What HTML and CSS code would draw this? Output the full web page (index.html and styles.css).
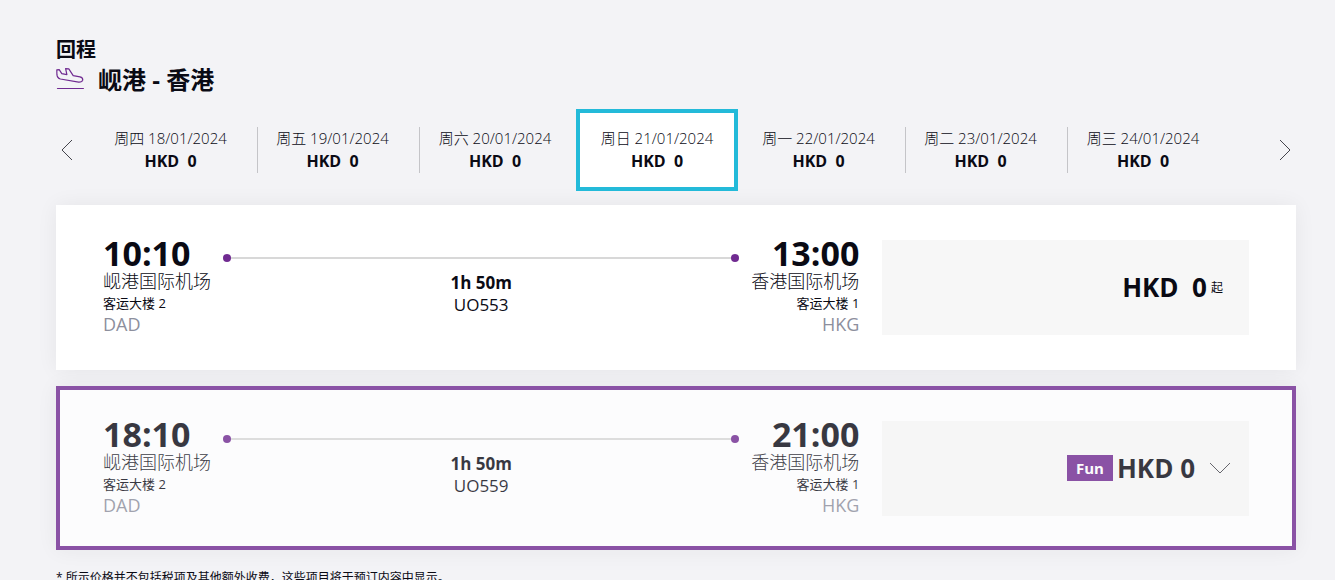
FILE: index.html
```html
<!DOCTYPE html>
<html lang="zh-CN">
<head>
    <meta charset="UTF-8">
    <meta name="viewport" content="width=device-width, initial-scale=1.0">
    <title>回程航班</title>
    <link rel="stylesheet" href="styles.css">
</head>
<body>

<main class="container">
    <header class="route-header">
        <h2 class="trip-type">回程</h2>
        <h1 class="route">
            <svg class="plane-icon" width="28" height="24" viewBox="0 0 28 24" fill="none" stroke="#702b91" stroke-width="1.2" stroke-linejoin="round" stroke-linecap="round" aria-hidden="true">
                <path d="M.8 1.8 L3.2 1.6 L5.8 5.6 L10.9 6.6 L9.6 .7 L12.8 .9 L17.2 7.6 L24 8.8 C26 9.3 27 10.6 26.7 12.2 C26.3 13.8 25 14.3 22.6 14.2 L4.4 11 C1.8 10.2 1 8.6 .9 6.4 Z"/>
                <path d="M1.5 20.5 H27.4"/>
            </svg>
            岘港 - 香港
        </h1>
    </header>

    <nav class="date-bar" aria-label="日期">
        <button class="arrow-btn prev" aria-label="上一个">
            <svg width="12" height="22" viewBox="0 0 12 22" fill="none" stroke="#44444c"><path d="M11 1 L1 11 L11 21"/></svg>
        </button>
        <div class="dates">
            <button class="date divider"><span>周四 18/01/2024</span><strong>HKD&nbsp; 0</strong></button>
            <button class="date divider"><span>周五 19/01/2024</span><strong>HKD&nbsp; 0</strong></button>
            <button class="date"><span>周六 20/01/2024</span><strong>HKD&nbsp; 0</strong></button>
            <button class="date selected"><span>周日 21/01/2024</span><strong>HKD&nbsp; 0</strong></button>
            <button class="date divider"><span>周一 22/01/2024</span><strong>HKD&nbsp; 0</strong></button>
            <button class="date divider"><span>周二 23/01/2024</span><strong>HKD&nbsp; 0</strong></button>
            <button class="date"><span>周三 24/01/2024</span><strong>HKD&nbsp; 0</strong></button>
        </div>
        <button class="arrow-btn next" aria-label="下一个">
            <svg width="12" height="22" viewBox="0 0 12 22" fill="none" stroke="#44444c"><path d="M1 1 L11 11 L1 21"/></svg>
        </button>
    </nav>

    <section class="flight">
        <div class="leg">
            <div class="stop">
                <div class="time">10:10</div>
                <div class="airport">岘港国际机场</div>
                <div class="terminal">客运大楼 2</div>
                <div class="code">DAD</div>
            </div>
            <div class="path">
                <div class="line"></div>
                <div class="duration">1h 50m</div>
                <div class="number">UO553</div>
            </div>
            <div class="stop arrive">
                <div class="time">13:00</div>
                <div class="airport">香港国际机场</div>
                <div class="terminal">客运大楼 1</div>
                <div class="code">HKG</div>
            </div>
        </div>
        <button class="price-box">
            <span class="price">HKD&nbsp; 0</span>
            <span class="from">起</span>
        </button>
    </section>

    <section class="flight active">
        <div class="leg">
            <div class="stop">
                <div class="time">18:10</div>
                <div class="airport">岘港国际机场</div>
                <div class="terminal">客运大楼 2</div>
                <div class="code">DAD</div>
            </div>
            <div class="path">
                <div class="line"></div>
                <div class="duration">1h 50m</div>
                <div class="number">UO559</div>
            </div>
            <div class="stop arrive">
                <div class="time">21:00</div>
                <div class="airport">香港国际机场</div>
                <div class="terminal">客运大楼 1</div>
                <div class="code">HKG</div>
            </div>
        </div>
        <button class="price-box">
            <span class="fare-tag">Fun</span>
            <span class="price">HKD 0</span>
            <svg class="chevron" width="22" height="12" viewBox="0 0 22 12" fill="none" stroke="#44444c"><path d="M1 1 L11 11 L21 1"/></svg>
        </button>
    </section>

    <p class="note">* 所示价格并不包括税项及其他额外收费，这些项目将于预订内容中显示。</p>
</main>

</body>
</html>
```
FILE: styles.css
```css
* {
    box-sizing: border-box;
}
body {
    margin: 0;
    height: 100vh;
    overflow: hidden;
    background-color: #f3f3f6;
    color: #0a0a14;
    font-family: "Open Sans", "Noto Sans CJK SC", sans-serif;
}
button {
    margin: 0;
    padding: 0;
    border: none;
    background: none;
    color: inherit;
    font-family: inherit;
    cursor: pointer;
}
.container {
    padding: 37px 39px 0 56px;
}
.trip-type {
    margin: 0;
    font-size: 20px;
    line-height: 26px;
}
.route {
    display: flex;
    align-items: center;
    gap: 14px;
    margin: 0;
    font-size: 24px;
    line-height: 34px;
}
.date-bar {
    display: flex;
    margin-top: 12px;
    height: 82px;
}
.arrow-btn {
    display: flex;
    align-items: center;
    padding: 0 5px;
}
.prev {
    width: 40px;
}
.next {
    width: 66px;
    justify-content: flex-end;
}
.dates {
    flex: 1;
    display: grid;
    grid-template-columns: repeat(7, 1fr);
    align-items: center;
}
.date {
    height: 46px;
    padding-right: 12px;
    display: flex;
    flex-direction: column;
    align-items: center;
    justify-content: center;
    font-size: 15px;
    font-weight: 300;
    line-height: 23px;
}
.date strong {
    font-size: 16px;
    font-weight: 700;
}
.divider {
    border-right: 1px solid #c4c4c8;
}
.selected {
    height: 82px;
    margin: 0 6px 0 -6px;
    padding: 0;
    border: 4px solid #23bad9;
    background-color: #fff;
}
.flight {
    display: flex;
    justify-content: space-between;
    align-items: center;
    margin-top: 14px;
    padding: 31px 47px 32px;
    background-color: #fff;
    box-shadow: 0 0 20px rgba(0, 0, 0, 0.06);
}
.active {
    margin-top: 16px;
    padding: 27px 43px;
    border: 4px solid #702b91;
    opacity: 0.8;
}
.leg {
    flex: 0 0 66%;
    display: flex;
    gap: 12px;
    padding-bottom: 4px;
}
.arrive {
    text-align: right;
}
.time {
    font-size: 34px;
    font-weight: 700;
    line-height: 34px;
}
.airport {
    font-size: 18px;
    font-weight: 300;
    line-height: 22px;
}
.terminal {
    font-size: 13px;
    line-height: 22px;
}
.code {
    color: #8d8f9d;
    font-size: 18px;
    line-height: 20px;
}
.path {
    flex: 1;
    padding-top: 18px;
    text-align: center;
    font-size: 17px;
    line-height: 22px;
}
.line {
    display: flex;
    align-items: center;
    justify-content: space-between;
    height: 8px;
    margin-bottom: 10px;
    background: linear-gradient(#d8d8d8, #d8d8d8) center / calc(100% - 8px) 2px no-repeat;
}
.line::before,
.line::after {
    content: "";
    width: 8px;
    height: 8px;
    border-radius: 50%;
    background-color: #702b91;
}
.duration {
    font-weight: 700;
}
.price-box {
    flex: 0 0 32%;
    display: flex;
    align-items: center;
    justify-content: flex-end;
    gap: 4px;
    height: 95px;
    padding-right: 26px;
    background-color: #f7f7f7;
}
.price {
    font-size: 26px;
    font-weight: 700;
}
.from {
    font-size: 12px;
}
.fare-tag {
    padding: 0 9px;
    background-color: #702b91;
    color: #fff;
    font-size: 15px;
    font-weight: 700;
    line-height: 26px;
}
.active .price-box {
    padding-right: 18px;
}
.chevron {
    margin-left: 10px;
}
.note {
    margin: 17px 0 0;
    font-size: 12px;
    line-height: 22px;
}
```
